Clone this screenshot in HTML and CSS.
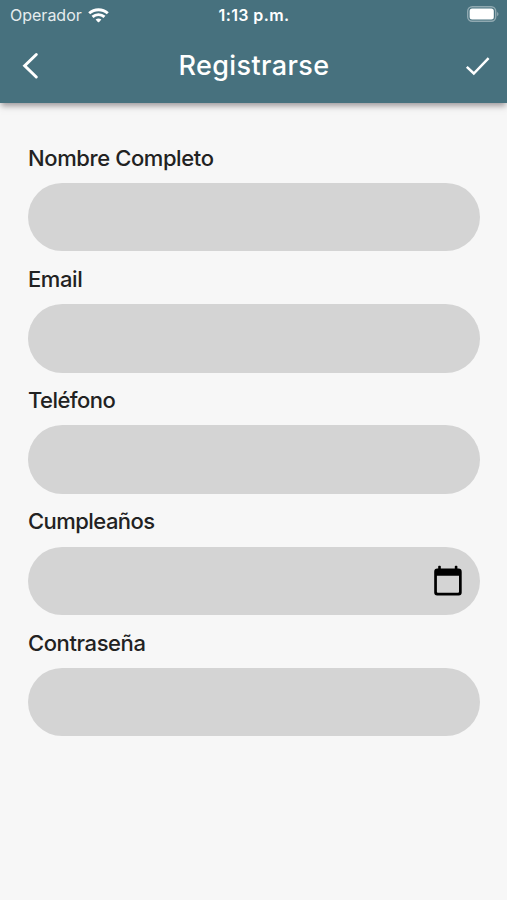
FILE: index.html
```html
<!DOCTYPE html>
<html lang="es">
<head>
<meta charset="utf-8">
<title>Registrarse</title>
<link rel="stylesheet" href="styles.css">
</head>
<body>
<header class="header">
  <div class="status">
    <div class="carrier"><span>Operador</span>
      <svg width="21" height="15" viewBox="0 0 21 15" fill="none" stroke="#fff" stroke-width="2.9"><path d="M1.200 5.300C6.500.5 14.500.5 19.800 5.300M4.500 8.900C8 5.800 13 5.800 16.500 8.900"/><path d="M7.600 11.500Q10.500 9.300 13.400 11.500L11.200 14Q10.500 14.700 9.800 14Z" fill="#fff" stroke="none"/></svg>
    </div>
    <span class="time">1:13 p.m.</span>
    <svg class="battery" width="32" height="16" viewBox="0 0 32 16"><rect x=".7" y=".7" width="28" height="14.600" rx="4.500" fill="none" stroke="#fff" stroke-opacity=".4" stroke-width="1.400"/><rect x="2.600" y="2.600" width="24.200" height="10.800" rx="2.500" fill="#fff"/><path d="M30.300 5.700Q32.500 8 30.300 10.300Z" fill="#fff" fill-opacity=".5"/></svg>
  </div>
  <div class="toolbar">
    <svg width="28" height="32" viewBox="0 0 28 32" fill="none" stroke="#fff" stroke-width="3" stroke-linecap="round"><path d="M18.300 4.500L6.700 15.700L18.300 27"/></svg>
    <h1>Registrarse</h1>
    <svg width="28" height="32" viewBox="0 0 28 32" fill="none" stroke="#fff" stroke-width="2.500"><path d="M3.800 16.800L10.800 23.500L25.600 8.200"/></svg>
  </div>
</header>
<form class="form">
  <label class="label" for="name">Nombre Completo</label>
  <div class="field"><input id="name" type="text"></div>
  <label class="label" for="email">Email</label>
  <div class="field"><input id="email" type="email"></div>
  <label class="label narrow" for="phone">Teléfono</label>
  <div class="field"><input id="phone" type="tel"></div>
  <label class="label narrow" for="birthday">Cumpleaños</label>
  <div class="field"><input id="birthday" type="text">
    <svg width="28" height="31" viewBox="0 0 28 31"><path fill="#000" fill-rule="evenodd" d="M4.200 1.600q0-.8.8-.8h1q.8 0 .8.800V3.500h14V1.600q0-.8.8-.8h1q.8 0 .8.800V3.500h1.100q3.200 0 3.200 3.200v20.800q0 3-3 3H3.200q-3 0-3-3V6.700q0-3.200 3.200-3.200h.8zM2.900 10.700v16q0 1 1 1H24q1 0 1-1v-16z"/></svg>
  </div>
  <label class="label" for="password">Contraseña</label>
  <div class="field"><input id="password" type="password"></div>
</form>
</body>
</html>
```
FILE: styles.css
```css
* { box-sizing: border-box; }
body { margin: 0; height: 900px; background: #f7f7f7; color: #222; font-family: Inter, sans-serif; }
.header { height: 103px; background: #47717e; color: #fff; box-shadow: 0 4px 6px -1px rgba(70,60,65,.5); }
.status { height: 30px; padding: 0 8px 0 10px; display: grid; grid-template-columns: 1fr auto 1fr; align-items: center; font-size: 16px; }
.carrier { display: flex; align-items: center; gap: 6px; color: #e5ecee; }
.time { font-weight: 600; letter-spacing: .4px; margin-left: -1px; }
.battery { justify-self: end; margin-top: -2px; }
.toolbar { height: 72px; padding: 0 16px 0 18px; display: flex; align-items: center; justify-content: space-between; }
h1 { margin: -1px 1px 0 0; font-size: 27px; font-weight: 500; letter-spacing: .4px; }
.form { padding: 39.500px 27px 0 28px; }
.label { display: block; height: 40.300px; line-height: 31px; font-size: 22px; font-weight: 500; letter-spacing: -.4px; }
.narrow { letter-spacing: -.55px; }
.field { height: 68.500px; margin-bottom: 12.500px; border-radius: 34.300px; background: #d4d4d4; display: flex; align-items: center; padding: 0 18px 0 24px; }
.field input { flex: 1; min-width: 0; border: 0; outline: 0; background: none; font: inherit; font-size: 22px; }
```
